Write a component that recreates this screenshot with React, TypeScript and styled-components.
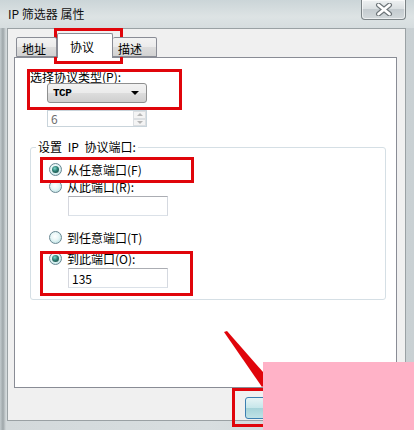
import styled, { createGlobalStyle } from 'styled-components';

const GlobalStyle = createGlobalStyle`
  html, body {
    margin: 0;
    padding: 0;
    background: #fff;
  }
  body {
    font-family: "Noto Sans CJK SC", "Noto Sans", sans-serif;
    font-size: 12px;
    color: #000;
  }
`;

const Window = styled.div`
  position: relative;
  width: 414px;
  height: 430px;
  display: flex;
  flex-direction: column;
  overflow: hidden;
  background: linear-gradient(90deg, #c3cbce 0px, #9ea6a9 3px, #d3d9db 6px, #d8dee0 50%, #c9d0d3 100%);
`;

const TitleBar = styled.div`
  height: 28px;
  display: flex;
  align-items: flex-start;
  padding-left: 8px;
  background: linear-gradient(180deg, #cbd5d8 0%, #dde3e4 60%, #d6dddf 100%);
`;

const Title = styled.span`
  margin-top: 6px;
  line-height: 16px;
  font-size: 12px;
  color: #111;
`;

const CloseButton = styled.div`
  margin-left: auto;
  margin-right: 8px;
  width: 45px;
  height: 20px;
  box-sizing: border-box;
  border: 1px solid #7b8386;
  border-top: none;
  border-radius: 0 0 4px 4px;
  background: linear-gradient(180deg, #eef1f2 0%, #dbe0e2 45%, #c4cbcf 50%, #d3d9dc 100%);
  box-shadow: inset 0 0 0 1px rgba(255, 255, 255, 0.6);
  display: flex;
  align-items: center;
  justify-content: center;
`;

const Body = styled.div`
  flex: 1;
  margin: 0 8px 9px 7px;
  background: #f0f0f0;
  border: 1px solid #9aa1a4;
  display: flex;
  flex-direction: column;
  padding: 4px 8px 0 6px;
`;

const TabStrip = styled.div`
  height: 24px;
  display: flex;
  align-items: flex-end;
  padding-left: 2px;
  position: relative;
  z-index: 1;
`;

const Tab = styled.div<{ $active?: boolean; $width: number }>`
  width: ${p => p.$width}px;
  height: ${p => (p.$active ? 25 : 20)}px;
  margin-bottom: ${p => (p.$active ? -1 : 0)}px;
  box-sizing: border-box;
  border: 1px solid #898c95;
  border-bottom: ${p => (p.$active ? 'none' : '1px solid #898c95')};
  border-left: ${p => (p.$active ? '1px solid #898c95' : 'none')};
  border-radius: 2px 2px 0 0;
  background: ${p =>
    p.$active ? '#fff' : 'linear-gradient(180deg, #f3f3f3 0%, #ebebeb 50%, #dddddd 51%, #d2d2d2 100%)'};
  padding-left: ${p => (p.$active ? 12 : 5)}px;
  padding-top: ${p => (p.$active ? 0 : 2)}px;
  display: flex;
  align-items: center;
  font-size: 12px;

  &:first-child {
    border-left: 1px solid #898c95;
  }
`;

const Panel = styled.div`
  height: 331px;
  box-sizing: border-box;
  border: 1px solid #898c95;
  background: #fff;
  padding: 12px 0 0 15px;
  display: flex;
  flex-direction: column;
  align-items: flex-start;
`;

const Label = styled.div`
  line-height: 13px;
  height: 13px;
  font-size: 12px;
`;

const Select = styled.div`
  margin-left: 17px;
  width: 100px;
  height: 20px;
  box-sizing: border-box;
  border: 1px solid #8e8f8f;
  border-radius: 3px;
  background: linear-gradient(180deg, #f2f2f2 0%, #ebebeb 50%, #dddddd 51%, #cfcfcf 100%);
  display: flex;
  align-items: center;
  padding: 0 7px 0 5px;
  font-family: "Liberation Mono", "DejaVu Sans Mono", monospace;
  font-size: 11px;
  font-weight: bold;
  letter-spacing: -0.5px;

  &::after {
    content: '';
    margin-left: auto;
    border-left: 4px solid transparent;
    border-right: 4px solid transparent;
    border-top: 4px solid #000;
  }
`;

const Spin = styled.div`
  margin: 7px 0 0 17px;
  width: 100px;
  height: 17px;
  box-sizing: border-box;
  border: 1px solid #c9d4db;
  background: #fff;
  display: flex;
  align-items: center;
  padding-left: 3px;
  color: #6d6d6d;
  font-size: 12px;
`;

const SpinButtons = styled.div`
  margin-left: auto;
  width: 13px;
  height: 15px;
  display: flex;
  flex-direction: column;
`;

const SpinButton = styled.div<{ $up?: boolean }>`
  flex: 1;
  box-sizing: border-box;
  border: 1px solid #dcdfe2;
  background: #f4f4f4;
  display: flex;
  align-items: center;
  justify-content: center;

  &::after {
    content: '';
    border-left: 3px solid transparent;
    border-right: 3px solid transparent;
    ${p => (p.$up ? 'border-bottom: 3px solid #b6b6b6;' : 'border-top: 3px solid #b6b6b6;')}
  }
`;

const Group = styled.fieldset`
  margin: 13px 0 0 0;
  padding: 0;
  width: 356px;
  height: 160px;
  box-sizing: border-box;
  border: 1px solid #d5dfe5;
  border-radius: 3px;
  min-inline-size: 0;
`;

const Legend = styled.legend`
  margin-left: 5px;
  padding: 0 2px;
  line-height: 14px;
  font-size: 12px;
  word-spacing: 3px;
`;

const Rows = styled.div`
  padding: 7px 0 0 18px;
  display: flex;
  flex-direction: column;
  align-items: flex-start;
`;

const RadioRow = styled.div<{ $gap?: number }>`
  height: 17px;
  margin-top: ${p => p.$gap || 0}px;
  display: flex;
  align-items: center;
  gap: 5px;
  font-size: 12px;
`;

const Radio = styled.span<{ $checked?: boolean }>`
  width: 13px;
  height: 13px;
  border-radius: 50%;
  box-sizing: border-box;
  border: 1px solid #6a8893;
  background: radial-gradient(circle at 45% 40%, #ffffff 0%, #e6f6f6 45%, #a9d9dc 100%);
  display: flex;
  align-items: center;
  justify-content: center;

  &::after {
    content: '';
    display: ${p => (p.$checked ? 'block' : 'none')};
    width: 7px;
    height: 7px;
    border-radius: 50%;
    background: radial-gradient(circle at 40% 35%, #7fd8cf 0%, #2c7d72 45%, #143f3a 100%);
  }
`;

const TextBox = styled.div`
  margin: 1px 0 0 19px;
  width: 100px;
  height: 20px;
  box-sizing: border-box;
  border: 1px solid #abadb3;
  border-left-color: #d5d7de;
  border-right-color: #d5d9e0;
  border-bottom-color: #dbe1e8;
  background: #fff;
  padding-left: 3px;
  display: flex;
  align-items: center;
  font-size: 12px;
`;

const Footer = styled.div`
  flex: 1;
  display: flex;
  justify-content: flex-end;
  align-items: flex-start;
  padding: 9px 6px 0 0;
  gap: 6px;
`;

const Button = styled.div<{ $default?: boolean }>`
  width: 70px;
  height: 22px;
  box-sizing: border-box;
  border: 1px solid ${p => (p.$default ? '#3c7fb1' : '#707070')};
  border-radius: 3px;
  background: ${p =>
    p.$default
      ? 'linear-gradient(180deg, #e6f4f5 0%, #c6e6ea 50%, #a6d3d9 51%, #bfe2e6 100%)'
      : 'linear-gradient(180deg, #f2f2f2 0%, #ebebeb 50%, #dddddd 51%, #cfcfcf 100%)'};
  display: flex;
  align-items: center;
  justify-content: center;
  font-size: 12px;
`;

const Highlight = styled.div<{ $x: number; $y: number; $w: number; $h: number }>`
  position: absolute;
  left: ${p => p.$x}px;
  top: ${p => p.$y}px;
  width: ${p => p.$w}px;
  height: ${p => p.$h}px;
  box-sizing: border-box;
  border: 3px solid #e0050b;
  pointer-events: none;
`;

const ArrowLayer = styled.svg`
  position: absolute;
  left: 0;
  top: 0;
  pointer-events: none;
`;

const PinkBlock = styled.div`
  position: absolute;
  left: 263px;
  top: 362px;
  right: 0;
  bottom: 0;
  background: #ffb2c7;
`;

const App = () => {
  return (
    <>
      <GlobalStyle />
      <Window>
        <TitleBar>
          <Title>IP 筛选器 属性</Title>
          <CloseButton>
            <svg width="18" height="13" viewBox="0 0 18 13">
              <path d="M3.5 2 L14.5 11 M14.5 2 L3.5 11" stroke="#6d7579" strokeWidth="5" strokeLinecap="round" />
              <path d="M3.5 2 L14.5 11 M14.5 2 L3.5 11" stroke="#fff" strokeWidth="2.8" strokeLinecap="round" />
            </svg>
          </CloseButton>
        </TitleBar>
        <Body>
          <TabStrip>
            <Tab $width={41}>地址</Tab>
            <Tab $width={56} $active>协议</Tab>
            <Tab $width={44}>描述</Tab>
          </TabStrip>
          <Panel>
            <Label>选择协议类型(P):</Label>
            <Select>TCP</Select>
            <Spin>
              6
              <SpinButtons>
                <SpinButton $up />
                <SpinButton />
              </SpinButtons>
            </Spin>
            <Group>
              <Legend>设置 IP 协议端口:</Legend>
              <Rows>
                <RadioRow>
                  <Radio $checked />
                  从任意端口(F)
                </RadioRow>
                <RadioRow>
                  <Radio />
                  从此端口(R):
                </RadioRow>
                <TextBox />
                <RadioRow $gap={13}>
                  <Radio />
                  到任意端口(T)
                </RadioRow>
                <RadioRow $gap={4}>
                  <Radio $checked />
                  到此端口(O):
                </RadioRow>
                <TextBox>135</TextBox>
              </Rows>
            </Group>
          </Panel>
          <Footer>
            <Button $default>确定</Button>
            <Button>取消</Button>
          </Footer>
        </Body>

        <Highlight $x={54} $y={28} $w={69} $h={36} />
        <Highlight $x={27} $y={69} $w={155} $h={41} />
        <Highlight $x={40} $y={157} $w={154} $h={26} />
        <Highlight $x={40} $y={251} $w={153} $h={45} />
        <Highlight $x={232} $y={388} $w={60} $h={39} />
        <ArrowLayer width="414" height="430" viewBox="0 0 414 430">
          <polygon points="224,332 227,331 270,380 262,387" fill="#e0050b" />
        </ArrowLayer>
        <PinkBlock />
      </Window>
    </>
  );
};

export default App;
